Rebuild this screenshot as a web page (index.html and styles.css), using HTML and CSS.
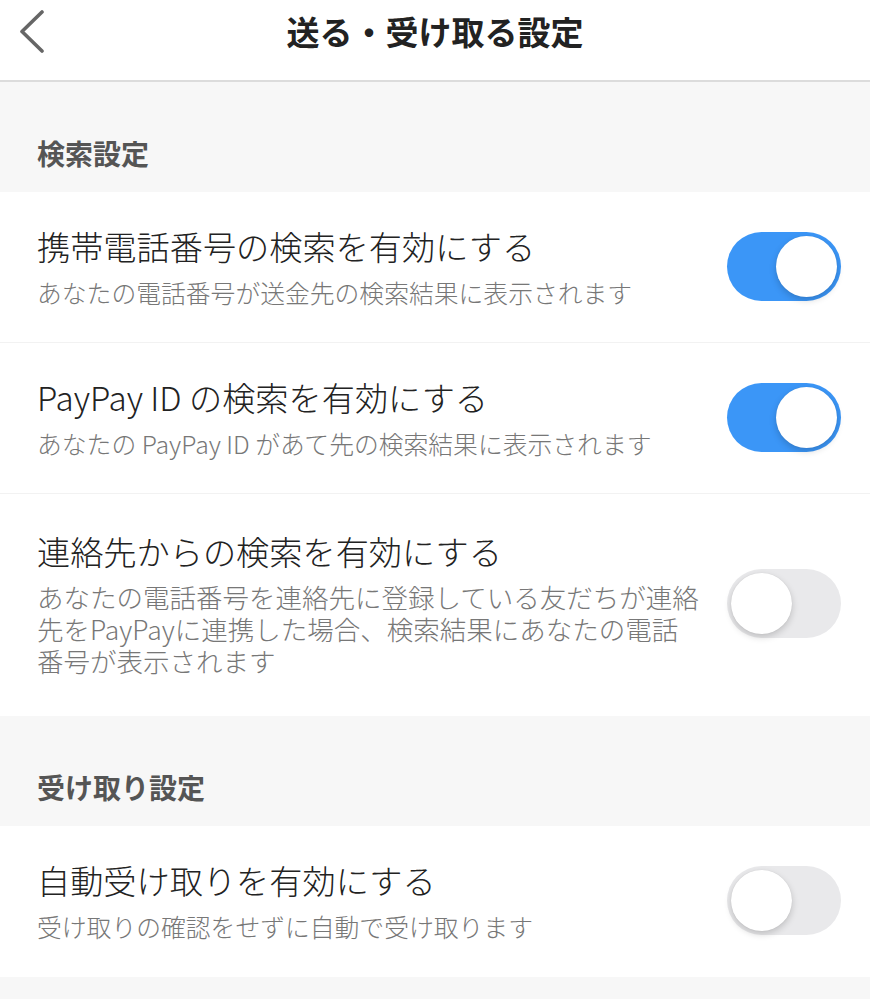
FILE: index.html
```html
<!DOCTYPE html>
<html lang="ja">
<head>
  <meta charset="UTF-8">
  <title>送る・受け取る設定</title>
  <link rel="stylesheet" href="styles.css">
</head>
<body>
  <div class="header">
    <a class="back" href="javascript:;">
      <svg width="26" height="44" viewBox="0 0 26 44">
        <polyline points="22,2 2,21.5 22,41" fill="none" stroke="#666" stroke-width="3.6" stroke-linecap="round" stroke-linejoin="round"/>
      </svg>
    </a>
    <h1>送る・受け取る設定</h1>
    <span></span>
  </div>

  <h2 class="section">検索設定</h2>
  <div class="list">
    <div class="row">
      <div class="text">
        <p class="title">携帯電話番号の検索を有効にする</p>
        <p class="desc">あなたの電話番号が送金先の検索結果に表示されます</p>
      </div>
      <span class="switch on"><i></i></span>
    </div>
    <div class="row">
      <div class="text">
        <p class="title">PayPay ID の検索を有効にする</p>
        <p class="desc">あなたの PayPay ID があて先の検索結果に表示されます</p>
      </div>
      <span class="switch on"><i></i></span>
    </div>
    <div class="row row-tall">
      <div class="text">
        <p class="title">連絡先からの検索を有効にする</p>
        <p class="desc desc-big">あなたの電話番号を連絡先に登録している友だちが連絡先をPayPayに連携した場合、検索結果にあなたの電話番号が表示されます</p>
      </div>
      <span class="switch"><i></i></span>
    </div>
  </div>

  <h2 class="section">受け取り設定</h2>
  <div class="list">
    <div class="row">
      <div class="text">
        <p class="title">自動受け取りを有効にする</p>
        <p class="desc">受け取りの確認をせずに自動で受け取ります</p>
      </div>
      <span class="switch"><i></i></span>
    </div>
  </div>
</body>
</html>
```

FILE: styles.css
```css
html,body {
  overflow: hidden;
}
body,h1,h2,p {margin: 0;padding: 0;}
body {
  background-color: #f7f7f7;
  color: #222;
  font-family: "Noto Sans CJK JP", "Noto Sans", sans-serif;
  height: 999px;
}

.header {
  display: grid;
  grid-template-columns: 1fr auto 1fr;
  align-items: start;
  height: 82px;
  padding-top: 8px;
  box-sizing: border-box;
  background-color: #fff;
  border-bottom: 2px solid #dcdcdc;
}
.header .back {
  display: block;
  width: 26px;
  height: 44px;
  margin: 2px 0 0 20px;
}
.header h1 {
  font-size: 33px;
  line-height: 46px;
  font-weight: 700;
  color: #222;
}

.section {
  padding: 51px 0 19px 37px;
  font-size: 28px;
  line-height: 40px;
  font-weight: 700;
  color: #555;
}

.list {
  background-color: #fff;
}
.row {
  display: flex;
  align-items: center;
  padding: 32px 29px 34px 37px;
  border-bottom: 1px solid #f2f2f2;
}
.row:last-child {
  border-bottom: none;
  padding-bottom: 35px;
}
.row.row-tall {
  padding-top: 35px;
  padding-bottom: 39px;
}
.row .text {
  flex: 1;
  margin-right: 24px;
}
.row .title {
  font-size: 33.2px;
  line-height: 44px;
  font-weight: 300;
  color: #222;
}
.row .desc {
  margin-top: 8px;
  font-size: 24.8px;
  line-height: 32px;
  font-weight: 300;
  color: #777;
}
.row .desc-big {
  font-size: 26.5px;
  line-height: 32px;
}

.switch {
  position: relative;
  flex: none;
  width: 114px;
  height: 69px;
  border-radius: 35px;
  background-color: #e9e9eb;
}
.switch i {
  position: absolute;
  top: 4px;
  left: 4px;
  width: 61px;
  height: 61px;
  border-radius: 50%;
  background-color: #fff;
  box-shadow: 0 3px 7px rgba(0,0,0,.18), 0 0 1px rgba(0,0,0,.12);
}
.switch.on {
  background-color: #3b96f7;
}
.switch.on i {
  left: auto;
  right: 4px;
}
```
